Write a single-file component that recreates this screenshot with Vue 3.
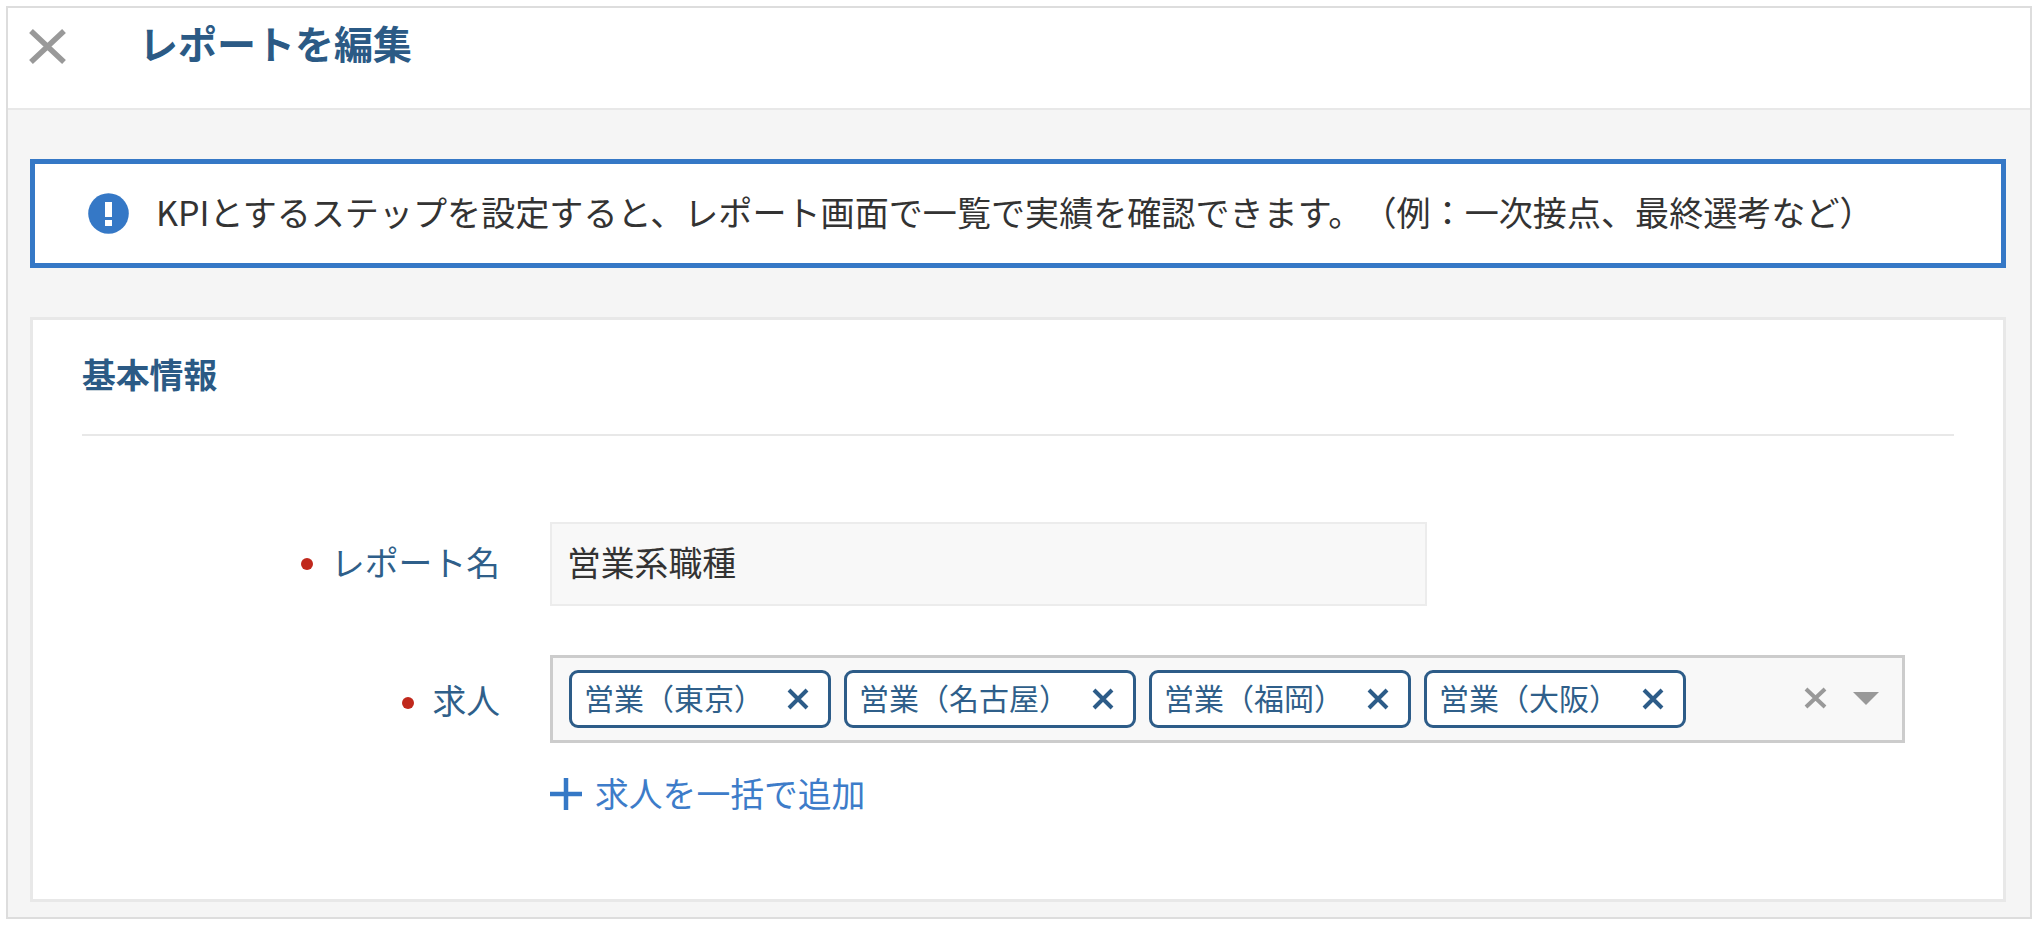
<script setup>
const tags = ['営業（東京）', '営業（名古屋）', '営業（福岡）', '営業（大阪）']
</script>

<template>
  <div class="page">
    <div class="frame">
      <header class="topbar">
        <button class="close" aria-label="閉じる">
          <svg width="37" height="35" viewBox="0 0 37 35"><path d="M2 2 L35 33 M35 2 L2 33" stroke="#999" stroke-width="5.5" fill="none" /></svg>
        </button>
        <h1 class="title">レポートを編集</h1>
      </header>

      <main class="body">
        <div class="alert">
          <svg class="alert-icon" width="41" height="41" viewBox="0 0 41 41">
            <circle cx="20.5" cy="20.5" r="20.3" fill="#3578c6" />
            <rect x="17" y="9" width="7" height="15" fill="#fff" />
            <rect x="17" y="27" width="7" height="6" fill="#fff" />
          </svg>
          <p class="alert-text">KPIとするステップを設定すると、レポート画面で一覧で実績を確認できます。（例：一次接点、最終選考など）</p>
        </div>

        <section class="card">
          <h2 class="card-title">基本情報</h2>
          <div class="form">
            <label class="label name-label"><span class="dot"></span><span class="label-text">レポート名</span></label>
            <div class="input"><span class="input-text">営業系職種</span></div>

            <label class="label job-label"><span class="dot"></span><span class="label-text">求人</span></label>
            <div class="field">
              <div class="select">
                <div class="tags">
                  <span v-for="t in tags" :key="t" class="tag">
                    <span class="tag-text">{{ t }}</span>
                    <svg width="22" height="22" viewBox="0 0 22 22"><path d="M2 2 L20 20 M20 2 L2 20" stroke="#2d5c88" stroke-width="4" fill="none" /></svg>
                  </span>
                </div>
                <svg class="clear" width="23" height="22" viewBox="0 0 23 22"><path d="M2 2 L21 20 M21 2 L2 20" stroke="#999" stroke-width="4" fill="none" /></svg>
                <svg class="caret" width="26" height="13" viewBox="0 0 26 13"><path d="M0 0 H26 L13 13 Z" fill="#999" /></svg>
              </div>
              <a class="add">
                <svg width="32" height="32" viewBox="0 0 32 32"><path d="M16 0 V32 M0 16 H32" stroke="#3578c6" stroke-width="4.5" fill="none" /></svg>
                <span class="add-text">求人を一括で追加</span>
              </a>
            </div>
          </div>
        </section>
      </main>
    </div>
  </div>
</template>

<style>
html, body { margin: 0; background: #fff; }
</style>

<style scoped>
* { box-sizing: border-box; }
.page {
  width: 2040px;
  height: 928px;
  padding: 6px 8px 9px 6px;
  font-family: "Noto Sans CJK JP", "Noto Sans", sans-serif;
  color: #333;
  text-spacing-trim: space-all;
}
.frame {
  height: 913px;
  border: 2px solid #ddd;
  background: #f5f5f5;
}
.topbar {
  height: 102px;
  display: flex;
  align-items: flex-start;
  background: #fff;
  border-bottom: 2px solid #e8e8e8;
  padding: 21px 0 0 21px;
}
.close {
  width: 37px;
  height: 35px;
  padding: 0;
  border: 0;
  background: none;
  display: flex;
}
.title {
  margin: -10px 0 0 73px;
  font-size: 39px;
  line-height: 46px;
  font-weight: 700;
  color: #2b5a85;
}
.body {
  padding: 49px 24px 0 22px;
}
.alert {
  height: 109px;
  border: 5px solid #3578c6;
  background: #fff;
  display: flex;
  align-items: center;
  padding-left: 53px;
  gap: 27px;
}
.alert-text {
  margin: -5px 0 0;
  font-size: 34.1px;
  line-height: 44px;
  white-space: nowrap;
}
.card {
  height: 585px;
  margin-top: 49px;
  border: 3px solid #e8e8e8;
  background: #fff;
  padding: 0 49px 0 49px;
}
.card-title {
  margin: 0;
  height: 116px;
  padding-top: 32px;
  border-bottom: 2px solid #e8e8e8;
  font-size: 33.8px;
  line-height: 44px;
  font-weight: 700;
  color: #2b5a85;
}
.form {
  display: grid;
  grid-template-columns: 418px 1fr;
  column-gap: 50px;
  row-gap: 49px;
  padding-top: 86px;
}
.label {
  display: flex;
  justify-content: flex-end;
  align-items: center;
  font-size: 33.8px;
  color: #2f5f8a;
  white-space: nowrap;
}
.label-text { margin-top: -6px; }
.name-label { height: 84px; }
.job-label { height: 88px; padding-top: 7px; }
.dot {
  width: 12px;
  height: 12px;
  border-radius: 50%;
  background: #c0281c;
  margin-right: 18px;
}
.input {
  width: 877px;
  height: 84px;
  display: flex;
  align-items: center;
  padding-left: 15px;
  border: 2px solid #ececec;
  background: #f8f8f8;
  font-size: 33.8px;
  color: #333;
}
.input-text { margin-top: -6px; }
.select {
  width: 1355px;
  height: 88px;
  display: flex;
  align-items: center;
  border: 3px solid #ccc;
  background: #f8f8f8;
  padding-left: 16px;
}
.tags {
  display: flex;
  gap: 13px;
  flex: 1;
}
.tag {
  height: 58px;
  display: flex;
  align-items: center;
  padding: 0 19px 0 12px;
  border: 3px solid #2d5c88;
  border-radius: 9px;
  background: #fff;
  font-size: 30px;
  color: #2f5f8a;
  white-space: nowrap;
}
.tag-text { margin-right: 23px; margin-top: -5px; }
.clear { margin-right: 26px; margin-top: -2px; }
.caret { margin-right: 23px; margin-top: -1px; }
.add {
  display: flex;
  align-items: center;
  gap: 13px;
  margin-top: 35px;
  height: 32px;
  font-size: 33.8px;
  color: #3d7cc9;
}
.add-text { margin-top: -3px; }
</style>
